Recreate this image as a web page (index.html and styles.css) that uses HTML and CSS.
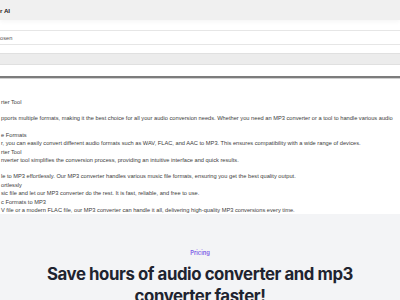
FILE: index.html
```
<!DOCTYPE html>
<html lang="en">
<head>
  <meta charset="UTF-8">
  <meta name="viewport" content="width=device-width, initial-scale=1.0">
  <title>MP3 Converter AI</title>
  <link rel="stylesheet" href="styles.css">
</head>
<body>

<header class="topbar">
  <div class="brand">r AI</div>
</header>

<div class="upload">
  <div class="file-row">osen</div>
  <div class="progress"></div>
  <div class="rule"></div>
</div>

<!-- article text -->
<div class="article">
  <h2>rter Tool</h2>
  <p class="gap">pports multiple formats, making it the best choice for all your audio conversion needs. Whether you need an MP3 converter or a tool to handle various audio</p>
  <h3>e Formats</h3>
  <p>r, you can easily convert different audio formats such as WAV, FLAC, and AAC to MP3. This ensures compatibility with a wide range of devices.</p>
  <h3>rter Tool</h3>
  <p class="gap">nverter tool simplifies the conversion process, providing an intuitive interface and quick results.</p>
  <p>le to MP3 effortlessly. Our MP3 converter handles various music file formats, ensuring you get the best quality output.</p>
  <h3>ortlessly</h3>
  <p>sic file and let our MP3 converter do the rest. It is fast, reliable, and free to use.</p>
  <h3>c Formats to MP3</h3>
  <p>V file or a modern FLAC file, our MP3 converter can handle it all, delivering high-quality MP3 conversions every time.</p>
</div>

<section class="pricing">
  <div class="eyebrow">Pricing</div>
  <h2 class="headline">Save hours of audio converter and mp3 converter faster!</h2>
</section>

</body>
</html>
```

FILE: styles.css
```
* { margin: 0; padding: 0; box-sizing: border-box; }
body {
  background: #fff;
  color: #444;
  font-family: 'Liberation Sans', Arial, sans-serif;
  overflow: hidden;
  width: 400px;
  height: 300px;
}

.topbar {
  background: #f0f0f0;
  height: 20px;
  display: flex;
  align-items: center;
  box-shadow: 0 2px 4px rgba(0, 0, 0, 0.04);
}
.brand { font-size: 6.2px; font-weight: bold; color: #222; }

.upload { padding-top: 10px; }
.file-row {
  height: 15px;
  border-top: 1px solid #e6e6e6;
  border-bottom: 1px solid #e6e6e6;
  font-size: 5.7px;
  color: #555;
  display: flex;
  align-items: center;
}
.progress {
  margin-top: 8px;
  height: 12px;
  background: #ececec;
  border-top: 1px solid #e0e0e0;
  border-bottom: 1px solid #e0e0e0;
}
.rule {
  margin-top: 11px;
  border-top: 2px solid #7c7c7c;
  border-bottom: 1px solid #cfcfcf;
}

.article {
  padding: 19px 0 0 1px;
  font-size: 5.7px;
  line-height: 8.4px;
  color: #3c3c3c;
  white-space: nowrap;
}
.article h2, .article h3 { font-size: 5.7px; font-weight: normal; }
.article h2 { margin-bottom: 8px; }
.article .gap { margin-bottom: 8px; }

.pricing {
  background: #f3f4f6;
  padding-top: 35px;
  text-align: center;
  font-family: Inter, 'Liberation Sans', sans-serif;
  height: 200px;
}
.eyebrow {
  color: #7c5ce6;
  font-size: 5.8px;
  line-height: 8px;
  font-weight: 600;
}
.headline {
  margin: 6px auto 0;
  width: 380px;
  font-size: 16.8px;
  line-height: 22px;
  font-weight: 700;
  letter-spacing: -0.025em;
  color: #1f2430;
}
```
